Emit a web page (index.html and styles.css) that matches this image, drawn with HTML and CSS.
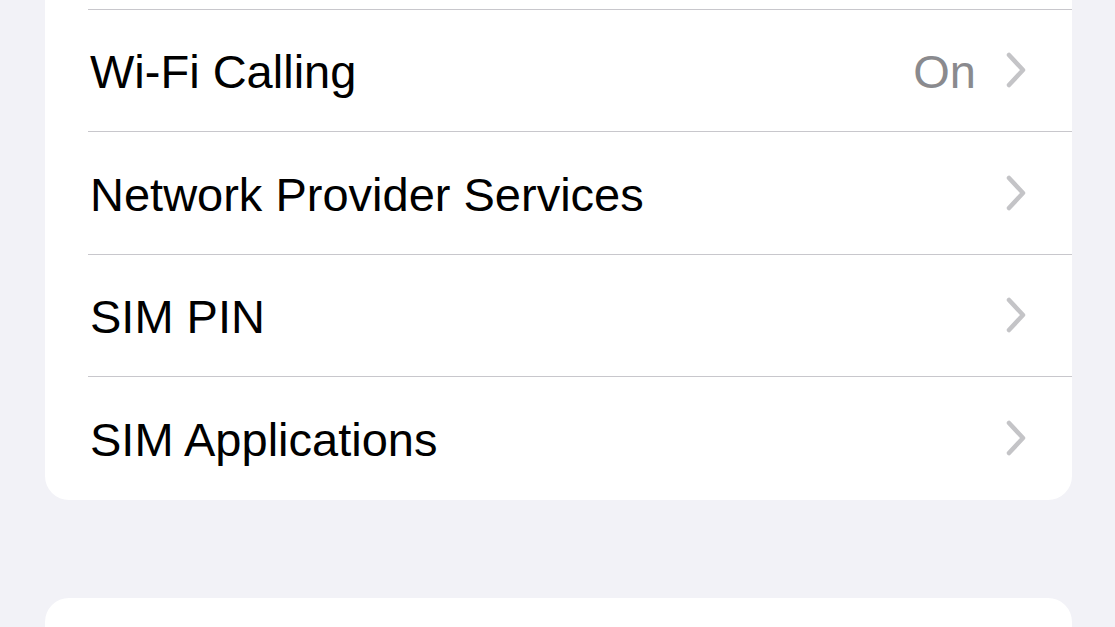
FILE: index.html
```html
<!DOCTYPE html>
<html lang="en">
<head>
    <meta charset="UTF-8">
    <meta name="viewport" content="width=device-width, initial-scale=1.0">
    <title>Cellular</title>
    <link rel="stylesheet" href="styles.css">
</head>
<body>

    <div class="page">
        <!-- Grupo de opções do SIM (o topo fica acima da tela) -->
        <div class="group group-top">
            <div class="row row-hidden"></div>
            <div class="row">
                <span class="label">Wi-Fi Calling</span>
                <span class="value">On</span>
                <span class="chevron"><svg viewBox="0 0 20 36"><polyline points="3,3 17,18 3,33"/></svg></span>
            </div>
            <div class="row">
                <span class="label">Network Provider Services</span>
                <span class="chevron"><svg viewBox="0 0 20 36"><polyline points="3,3 17,18 3,33"/></svg></span>
            </div>
            <div class="row">
                <span class="label">SIM PIN</span>
                <span class="chevron"><svg viewBox="0 0 20 36"><polyline points="3,3 17,18 3,33"/></svg></span>
            </div>
            <div class="row">
                <span class="label">SIM Applications</span>
                <span class="chevron"><svg viewBox="0 0 20 36"><polyline points="3,3 17,18 3,33"/></svg></span>
            </div>
        </div>

        <!-- Próximo grupo (só o topo aparece) -->
        <div class="group group-next">
            <div class="row"></div>
        </div>
    </div>

</body>
</html>
```

FILE: styles.css
```css
body {
    margin: 0;
    padding: 0;
    background-color: #f2f2f7;
    font-family: "Liberation Sans", Arial, sans-serif;
    overflow: hidden;
}
.page {
    padding: 0 43px 0 45px;
}
.group {
    background-color: #fff;
    border-radius: 24px;
}
.group-top {
    margin-top: -113px; /* o topo do grupo fica fora da tela */
}
.group-next {
    margin-top: 98px;
}
.row {
    display: flex;
    align-items: center;
    box-sizing: border-box;
    height: 122.5px;
    margin-left: 43px;
    padding: 3px 46px 0 2px;
    border-bottom: 1px solid #c8c7cc;
}
.row:last-child {
    border-bottom: none;
}
.label {
    flex: 1;
    font-size: 47px;
    color: #000;
    white-space: nowrap;
}
.value {
    font-size: 47px;
    color: #8a8a8e;
    margin-right: 30px;
}
.chevron {
    display: flex;
    margin-top: -3px;
}
.chevron svg {
    width: 20px;
    height: 36px;
    fill: none;
    stroke: #c4c4c7;
    stroke-width: 4.5;
    stroke-linecap: round;
    stroke-linejoin: round;
}
```
